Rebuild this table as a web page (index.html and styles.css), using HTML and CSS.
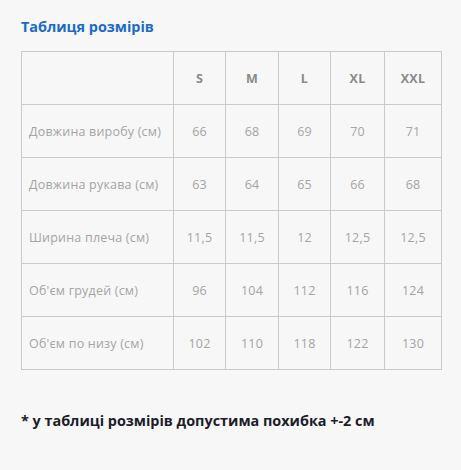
FILE: index.html
```html
<!DOCTYPE html>
<html lang="uk">
<head>
<meta charset="utf-8">
<link rel="stylesheet" href="styles.css">
</head>
<body>
<div class="page">
  <h2 class="title">Таблиця розмірів</h2>
  <table class="sizes">
    <colgroup>
      <col class="c-name"><col class="c-s"><col class="c-m"><col class="c-l"><col class="c-xl"><col class="c-xxl">
    </colgroup>
    <thead>
      <tr><th></th><th>S</th><th>M</th><th>L</th><th>XL</th><th>XXL</th></tr>
    </thead>
    <tbody>
      <tr><td class="name">Довжина виробу (см)</td><td>66</td><td>68</td><td>69</td><td>70</td><td>71</td></tr>
      <tr><td class="name">Довжина рукава (см)</td><td>63</td><td>64</td><td>65</td><td>66</td><td>68</td></tr>
      <tr><td class="name">Ширина плеча (см)</td><td>11,5</td><td>11,5</td><td>12</td><td>12,5</td><td>12,5</td></tr>
      <tr><td class="name">Об'єм грудей (см)</td><td>96</td><td>104</td><td>112</td><td>116</td><td>124</td></tr>
      <tr><td class="name">Об'єм по низу (см)</td><td>102</td><td>110</td><td>118</td><td>122</td><td>130</td></tr>
    </tbody>
  </table>
  <p class="note">* у таблиці розмірів допустима похибка +-2 см</p>
</div>
</body>
</html>
```

FILE: styles.css
```css
html, body {
  margin: 0;
  padding: 0;
  background: #f7f7f7;
}
.page {
  padding: 17px 21px 0 21px;
  font-family: "Open Sans", "Noto Sans", sans-serif;
}
.title {
  margin: 0;
  font-size: 14.4px;
  line-height: 20px;
  font-weight: 700;
  color: #1a6bc6;
}
.sizes {
  margin-top: 14px;
  border-collapse: collapse;
  width: 421px;
  table-layout: fixed;
}
.c-name { width: 152px; }
.c-s { width: 52px; }
.c-m { width: 53px; }
.c-l { width: 52px; }
.c-xl { width: 54px; }
.c-xxl { width: 57px; }
.sizes th, .sizes td {
  border: 1px solid #cacaca;
  height: 52px;
  padding: 0;
  text-align: center;
  font-size: 12.5px;
  letter-spacing: 0.2px;
  color: #a4a4a4;
}
.sizes th {
  font-weight: 700;
  color: #8a8a8a;
}
.sizes td.name {
  text-align: left;
  padding-left: 7px;
}
.note {
  margin: 41px 0 0 0;
  font-size: 14.4px;
  font-weight: 700;
  color: #1c1c2a;
  line-height: 20px;
}
```
